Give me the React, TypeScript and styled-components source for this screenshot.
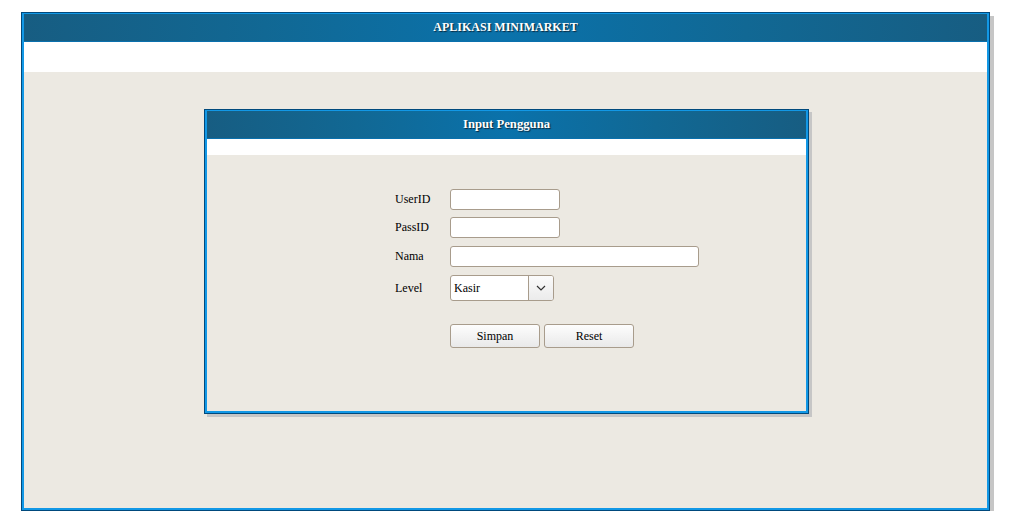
import React from "react";
import styled, { createGlobalStyle } from "styled-components";

const Global = createGlobalStyle`
  html, body { margin: 0; padding: 0; background: #ffffff; }
  body { font-family: "Liberation Serif", "Times New Roman", serif; }
`;

const Page = styled.div`
  padding: 12px 0 0 21px;
`;

const Frame = styled.div<{ $w: number; $h: number; $shadow: number }>`
  width: ${(p) => p.$w}px;
  height: ${(p) => p.$h}px;
  box-sizing: border-box;
  border: 1px solid #00497c;
  box-shadow: ${(p) => p.$shadow}px ${(p) => p.$shadow}px 0 #c6c6c6;
`;

const FrameInner = styled.div`
  height: 100%;
  box-sizing: border-box;
  border: 2px solid #1298e6;
  border-top-width: 1px;
  display: flex;
  flex-direction: column;
  background: #ece9e2;
`;

const Header = styled.div<{ $size: number }>`
  height: 28px;
  flex: none;
  box-sizing: border-box;
  display: flex;
  align-items: center;
  justify-content: center;
  background: linear-gradient(to right, #175d82 0%, #116894 25%, #0a72ab 50%, #116894 75%, #175d82 100%);
  border-bottom: 1px solid #0a70ad;
  color: #ffffff;
  font-weight: bold;
  font-size: ${(p) => p.$size}px;
  text-shadow: 1px 1px 1px #0a2a40;
`;

const Band = styled.div<{ $h: number }>`
  height: ${(p) => p.$h}px;
  flex: none;
  background: #ffffff;
`;

const Body = styled.div`
  flex: 1;
  background: #ece9e2;
`;

const PanelWrap = styled.div`
  margin: 37px 0 0 180px;
`;

const Form = styled.div`
  padding: 34px 0 0 188px;
  display: grid;
  grid-template-columns: 55px auto;
  align-items: center;
  justify-items: start;
`;

const Label = styled.span<{ $mt: number }>`
  font-size: 12px;
  color: #000;
  margin-top: ${(p) => p.$mt}px;
`;

const Input = styled.input<{ $w: number; $mt: number }>`
  width: ${(p) => p.$w}px;
  height: 21px;
  box-sizing: border-box;
  margin: ${(p) => p.$mt}px 0 0 0;
  border: 1px solid #a89c8c;
  border-radius: 3px;
  background: #ffffff;
  padding: 0 4px;
  font-family: "Liberation Serif", serif;
  font-size: 12px;
  outline: none;
`;

const Select = styled.div<{ $mt: number }>`
  margin-top: ${(p) => p.$mt}px;
  width: 104px;
  height: 26px;
  box-sizing: border-box;
  border: 1px solid #a89c8c;
  border-radius: 3px;
  display: flex;
  overflow: hidden;
  background: #ffffff;
`;

const SelectValue = styled.div`
  flex: 1;
  display: flex;
  align-items: center;
  padding-left: 3px;
  font-size: 12px;
  color: #000;
  border-right: 1px solid #a89c8c;
`;

const SelectArrow = styled.div`
  width: 24px;
  display: flex;
  align-items: center;
  justify-content: center;
  background: linear-gradient(#fbfbfb, #ebebeb);
`;

const Buttons = styled.div`
  grid-column: 2;
  margin-top: 23px;
  display: flex;
  gap: 4px;
`;

const Button = styled.button`
  width: 90px;
  height: 24px;
  box-sizing: border-box;
  border: 1px solid #a89c8c;
  border-radius: 3px;
  background: linear-gradient(#fdfdfd, #e9e9e9);
  font-family: "Liberation Serif", serif;
  font-size: 12px;
  color: #000;
  padding: 1px 0 0 0;
`;

export default function App() {
  return (
    <Page>
      <Global />
      <Frame $w={969} $h={499} $shadow={4}>
        <FrameInner>
          <Header $size={12}>APLIKASI MINIMARKET</Header>
          <Band $h={30} />
          <Body>
            <PanelWrap>
              <Frame $w={605} $h={305} $shadow={3}>
                <FrameInner>
                  <Header $size={12.7}>Input Pengguna</Header>
                  <Band $h={16} />
                  <Body>
                    <Form>
                      <Label $mt={0}>UserID</Label>
                      <Input $w={110} $mt={0} />
                      <Label $mt={7}>PassID</Label>
                      <Input $w={110} $mt={7} type="password" />
                      <Label $mt={8}>Nama</Label>
                      <Input $w={249} $mt={8} />
                      <Label $mt={8}>Level</Label>
                      <Select $mt={8}>
                        <SelectValue>Kasir</SelectValue>
                        <SelectArrow>
                          <svg width="10" height="6" viewBox="0 0 10 6">
                            <path d="M1 1 L5 5 L9 1" fill="none" stroke="#333" strokeWidth="1.2" />
                          </svg>
                        </SelectArrow>
                      </Select>
                      <Buttons>
                        <Button>Simpan</Button>
                        <Button>Reset</Button>
                      </Buttons>
                    </Form>
                  </Body>
                </FrameInner>
              </Frame>
            </PanelWrap>
          </Body>
        </FrameInner>
      </Frame>
    </Page>
  );
}
